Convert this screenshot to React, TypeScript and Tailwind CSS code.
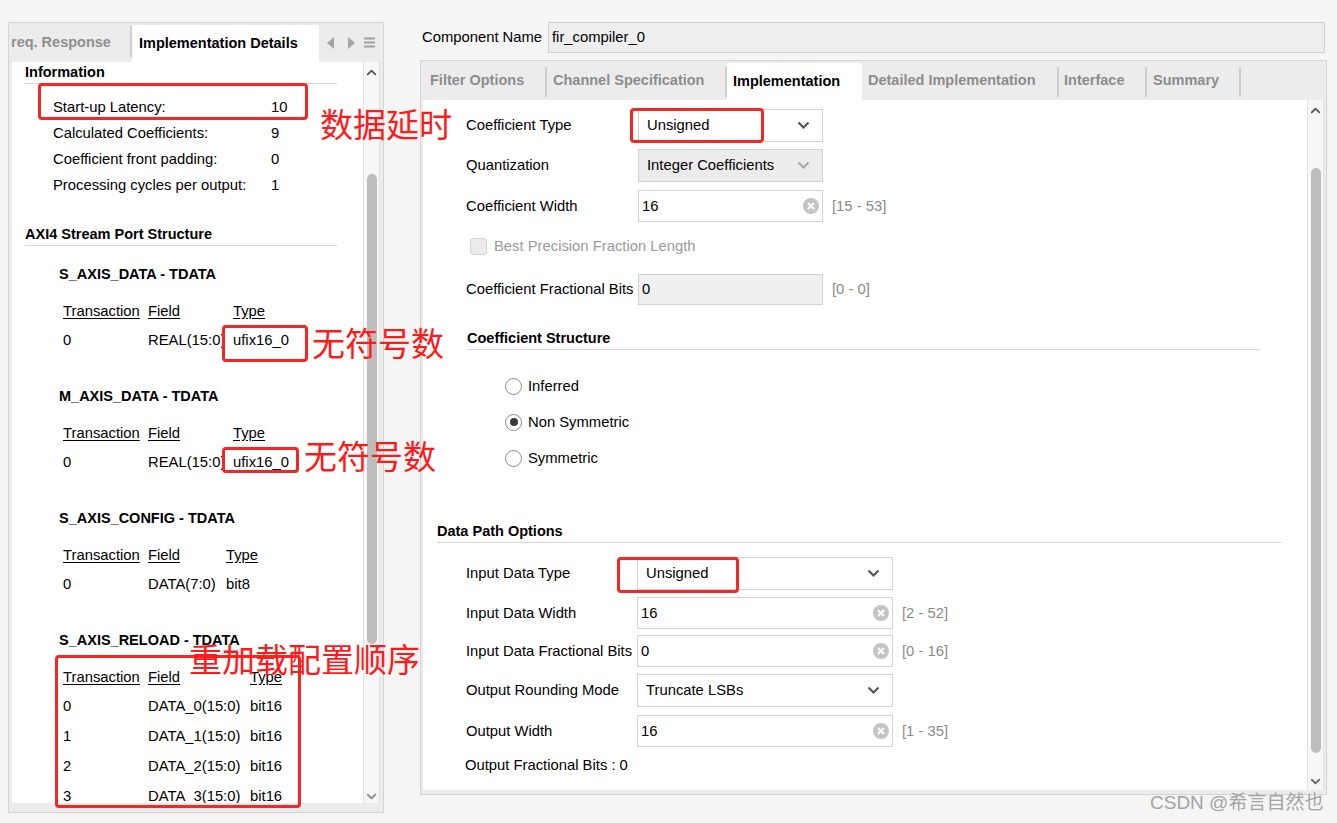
import { ChevronUp, ChevronDown } from "lucide-react";

const font = "font-['Liberation_Sans','Noto_Sans_CJK_SC',sans-serif]";
const cjk = "font-['Noto_Sans_CJK_SC',sans-serif]";
const bold = "font-bold text-[14.5px]";

function Chevron({ light }: { light?: boolean }) {
  return (
    <svg width="13" height="9" viewBox="0 0 13 9">
      <polyline points="1.5,1.5 6.5,6.5 11.5,1.5" fill="none" stroke={light ? "#a8a8a8" : "#555"} strokeWidth="2.2" />
    </svg>
  );
}

function ClearIcon() {
  return (
    <svg width="16" height="16" viewBox="0 0 16 16">
      <circle cx="8" cy="8" r="8" fill="#c4c4c4" />
      <path d="M5 5 L11 11 M11 5 L5 11" stroke="#fff" strokeWidth="2" />
    </svg>
  );
}

function Select({ value, width, disabled }: { value: string; width: string; disabled?: boolean }) {
  return (
    <div className={`${width} h-[33px] border border-[#d2d2d2] ${disabled ? "bg-[#ececec]" : "bg-white"} flex items-center justify-between pl-[8px] pr-[12px]`}>
      <span>{value}</span>
      <Chevron light={disabled} />
    </div>
  );
}

function Input({ value, width, clear }: { value: string; width: string; clear?: boolean }) {
  return (
    <div className={`${width} h-[32px] border border-[#d2d2d2] bg-white flex items-center justify-between pl-[3px] pr-[3px]`}>
      <span>{value}</span>
      {clear && <ClearIcon />}
    </div>
  );
}

function InfoRow({ label, value }: { label: string; value: string }) {
  return (
    <div className="h-[26px] flex items-center pl-[41px]">
      <span className="w-[218px]">{label}</span>
      <span>{value}</span>
    </div>
  );
}

type PortProps = {
  title: string;
  fieldW: string;
  clip?: boolean;
  rows: [string, string, string][];
  mt: string;
};

function Port({ title, fieldW, clip, rows, mt }: PortProps) {
  return (
    <div className={mt}>
      <div className={`h-[20px] flex items-center pl-[47px] ${bold}`}>{title}</div>
      <div className="pl-[51px] mt-[16px] h-[20px] flex items-center">
        <span className="w-[85px] underline underline-offset-2">Transaction</span>
        <span className={`${fieldW} underline underline-offset-2`}>Field</span>
        <span className="underline underline-offset-2">Type</span>
      </div>
      {rows.map((r, i) => (
        <div key={i} className={`pl-[51px] h-[20px] flex items-center ${i === 0 ? "mt-[9px]" : "mt-[10px]"}`}>
          <span className="w-[85px]">{r[0]}</span>
          <span className={`${fieldW} whitespace-nowrap overflow-hidden`}>
            <span className={clip ? "block w-[79px] overflow-hidden" : ""}>{r[1]}</span>
          </span>
          <span>{r[2]}</span>
        </div>
      ))}
    </div>
  );
}

function LeftPanel() {
  return (
    <div className="w-[376px] h-[791px] border border-[#d3d3d3] bg-[#ececec] flex flex-col">
      <div className="h-[39px] flex">
        <div className={`w-[121px] flex items-center pl-[2px] whitespace-nowrap text-[#8e8e8e] ${bold}`}>req. Response</div>
        <div className="w-[2px] h-[31px] mt-[3px] bg-[#cdcdcd]" />
        <div className={`w-[187px] mt-[2px] bg-white flex items-center pl-[7px] ${bold}`}>Implementation Details</div>
        <div className="flex-1 flex items-center">
          <svg width="8" height="12" viewBox="0 0 8 12" className="ml-[8px]">
            <polygon points="7,0 7,12 0,6" fill="#a4a4a4" />
          </svg>
          <svg width="8" height="12" viewBox="0 0 8 12" className="ml-[12px]">
            <polygon points="1,0 1,12 8,6" fill="#a4a4a4" />
          </svg>
          <svg width="11" height="11" viewBox="0 0 11 11" className="ml-[9px]">
            <path d="M0 1.5 H11 M0 5.5 H11 M0 9.5 H11" stroke="#a0a0a0" strokeWidth="2" />
          </svg>
        </div>
      </div>
      <div className="h-[741px] mx-[3px] flex">
        <div className="flex-1 bg-white overflow-hidden">
          <div className={`ml-[13px] w-[312px] h-[22px] border-b border-[#d8d8d8] flex items-center ${bold}`}>Information</div>
          <div className="mt-[10px]">
            <InfoRow label="Start-up Latency:" value="10" />
            <InfoRow label="Calculated Coefficients:" value="9" />
            <InfoRow label="Coefficient front padding:" value="0" />
            <InfoRow label="Processing cycles per output:" value="1" />
          </div>
          <div className={`mt-[26px] ml-[13px] w-[312px] h-[22px] border-b border-[#d8d8d8] flex items-center ${bold}`}>
            AXI4 Stream Port Structure
          </div>
          <Port mt="mt-[19px]" title="S_AXIS_DATA - TDATA" fieldW="w-[85px]" clip rows={[["0", "REAL(15:0)", "ufix16_0"]]} />
          <Port mt="mt-[37px]" title="M_AXIS_DATA - TDATA" fieldW="w-[85px]" clip rows={[["0", "REAL(15:0)", "ufix16_0"]]} />
          <Port mt="mt-[37px]" title="S_AXIS_CONFIG - TDATA" fieldW="w-[78px]" rows={[["0", "DATA(7:0)", "bit8"]]} />
          <Port
            mt="mt-[37px]"
            title="S_AXIS_RELOAD - TDATA"
            fieldW="w-[102px]"
            rows={[
              ["0", "DATA_0(15:0)", "bit16"],
              ["1", "DATA_1(15:0)", "bit16"],
              ["2", "DATA_2(15:0)", "bit16"],
              ["3", "DATA_3(15:0)", "bit16"],
            ]}
          />
        </div>
        <div className="w-[17px] bg-[#f7f7f7] border-x border-[#e2e2e2] flex flex-col items-center">
          <ChevronUp size={15} strokeWidth={3} color="#555" className="mt-[3px]" />
          <div className="w-[10px] h-[470px] mt-[94px] rounded-full bg-[#bdbdbd]" />
          <div className="flex-1" />
          <ChevronDown size={15} strokeWidth={3} color="#888" className="mb-[-1px]" />
        </div>
      </div>
    </div>
  );
}

function FRow({ label, children, range, labelW = "w-[172px]", mt }: { label: string; children: React.ReactNode; range?: string; labelW?: string; mt: string }) {
  return (
    <div className={`flex items-center pl-[43px] ${mt}`}>
      <span className={`${labelW} whitespace-nowrap`}>{label}</span>
      {children}
      {range && <span className="ml-[9px] text-[#8a8a8a]">{range}</span>}
    </div>
  );
}

function Radio({ label, checked, mt }: { label: string; checked?: boolean; mt: string }) {
  return (
    <div className={`h-[20px] flex items-center pl-[82px] ${mt}`}>
      <div className="w-[17px] h-[17px] rounded-full border-[1.5px] border-[#8c8c8c] bg-white flex items-center justify-center">
        {checked && <div className="w-[8px] h-[8px] rounded-full bg-[#3a3a3a]" />}
      </div>
      <span className="ml-[6px]">{label}</span>
    </div>
  );
}

function RightPanel() {
  const tabs = [
    { t: "Filter Options", w: "w-[124px]", pl: "pl-[7px]" },
    { t: "Channel Specification", w: "w-[180px]", pl: "pl-[6px]" },
    { t: "Implementation", w: "w-[135px]", pl: "pl-[6px]", active: true },
    { t: "Detailed Implementation", w: "w-[197px]", pl: "pl-[6px]" },
    { t: "Interface", w: "w-[88px]", pl: "pl-[5px]" },
    { t: "Summary", w: "w-[94px]", pl: "pl-[6px]" },
  ];
  return (
    <div className="w-[907px] flex flex-col">
      <div className="h-[31px] flex items-center">
        <span className="w-[128px] pl-[2px] whitespace-nowrap">Component Name</span>
        <div className="flex-1 mr-[2px] h-[31px] border border-[#d0d0d0] bg-[#eeeeee] flex items-center pl-[3px]">fir_compiler_0</div>
      </div>
      <div className="mt-[7px] h-[735px] border border-[#d3d3d3] bg-[#ececec] flex flex-col px-[2px]">
        <div className="h-[39px] flex">
          {tabs.map((tab) =>
            tab.active ? (
              <div key={tab.t} className={`${tab.w} mt-[2px] bg-white flex items-center ${tab.pl} ${bold}`}>
                {tab.t}
              </div>
            ) : (
              <div key={tab.t} className={`${tab.w} flex items-center`}>
                <div className={`flex-1 ${tab.pl} text-[#8c8c8c] whitespace-nowrap ${bold}`}>{tab.t}</div>
                <div className="w-[2px] h-[30px] mt-[2px] bg-[#cdcdcd]" />
              </div>
            )
          )}
        </div>
        <div className="h-[690px] flex">
          <div className="flex-1 bg-white pt-[9px]">
            <FRow label="Coefficient Type" mt="">
              <Select value="Unsigned" width="w-[185px]" />
            </FRow>
            <FRow label="Quantization" mt="mt-[7px]">
              <Select value="Integer Coefficients" width="w-[185px]" disabled />
            </FRow>
            <FRow label="Coefficient Width" range="[15 - 53]" mt="mt-[8px]">
              <Input value="16" width="w-[185px]" clear />
            </FRow>
            <div className="mt-[14px] h-[20px] flex items-center pl-[47px] text-[#9a9a9a]">
              <div className="w-[17px] h-[17px] rounded-[3px] border border-[#d4d4d4] bg-[#ececec]" />
              <span className="ml-[7px]">Best Precision Fraction Length</span>
            </div>
            <FRow label="Coefficient Fractional Bits" range="[0 - 0]" mt="mt-[18px]">
              <div className="w-[185px] h-[31px] border border-[#d2d2d2] bg-[#efefef] flex items-center pl-[3px]">0</div>
            </FRow>
            <div className={`mt-[23px] ml-[44px] w-[793px] h-[22px] border-b border-[#d6d6d6] flex items-center ${bold}`}>
              Coefficient Structure
            </div>
            <Radio label="Inferred" mt="mt-[26px]" />
            <Radio label="Non Symmetric" checked mt="mt-[16px]" />
            <Radio label="Symmetric" mt="mt-[16px]" />
            <div className={`mt-[53px] ml-[14px] w-[845px] h-[22px] border-b border-[#d6d6d6] flex items-center ${bold}`}>
              Data Path Options
            </div>
            <FRow label="Input Data Type" labelW="w-[171px]" mt="mt-[14px]">
              <Select value="Unsigned" width="w-[256px]" />
            </FRow>
            <FRow label="Input Data Width" labelW="w-[171px]" range="[2 - 52]" mt="mt-[7px]">
              <Input value="16" width="w-[256px]" clear />
            </FRow>
            <FRow label="Input Data Fractional Bits" labelW="w-[171px]" range="[0 - 16]" mt="mt-[6px]">
              <Input value="0" width="w-[256px]" clear />
            </FRow>
            <FRow label="Output Rounding Mode" labelW="w-[171px]" mt="mt-[7px]">
              <Select value="Truncate LSBs" width="w-[256px]" />
            </FRow>
            <FRow label="Output Width" labelW="w-[171px]" range="[1 - 35]" mt="mt-[8px]">
              <Input value="16" width="w-[256px]" clear />
            </FRow>
            <div className="mt-[8px] h-[20px] flex items-center pl-[42px]">Output Fractional Bits : 0</div>
          </div>
          <div className="w-[17px] bg-[#f7f7f7] border-x border-[#e2e2e2] flex flex-col items-center">
            <ChevronUp size={15} strokeWidth={3} color="#555" className="mt-[3px]" />
            <div className="w-[10px] h-[585px] mt-[50px] rounded-full bg-[#bdbdbd]" />
            <div className="flex-1" />
            <ChevronDown size={15} strokeWidth={3} color="#666" className="mb-[1px]" />
          </div>
        </div>
      </div>
    </div>
  );
}

function RedBox({ c }: { c: string }) {
  return <div className={`absolute border-[3px] border-[#f52626] rounded-[4px] ${c}`} />;
}

function RedText({ t, c }: { t: string; c: string }) {
  return <div className={`absolute ${cjk} text-[33px] leading-none text-[#ff1a1a] whitespace-nowrap ${c}`}>{t}</div>;
}

export default function App() {
  return (
    <div className={`relative w-[1337px] h-[823px] overflow-hidden bg-[#f5f5f5] text-[14.8px] text-black ${font}`}>
      <div className="flex items-start pl-[8px] pt-[22px]">
        <LeftPanel />
        <div className="ml-[36px]">
          <RightPanel />
        </div>
      </div>

      <RedBox c="left-[38px] top-[83px] w-[270px] h-[37px]" />
      <RedBox c="left-[222px] top-[325px] w-[86px] h-[37px]" />
      <RedBox c="left-[222px] top-[447px] w-[77px] h-[26px]" />
      <RedBox c="left-[55px] top-[655px] w-[246px] h-[153px]" />
      <RedBox c="left-[630px] top-[108px] w-[134px] h-[35px]" />
      <RedBox c="left-[617px] top-[557px] w-[122px] h-[36px]" />

      <RedText t="数据延时" c="left-[320px] top-[107px]" />
      <RedText t="无符号数" c="left-[312px] top-[326px]" />
      <RedText t="无符号数" c="left-[304px] top-[439px]" />
      <RedText t="重加载配置顺序" c="left-[189px] top-[642px]" />

      <div className={`absolute left-[1150px] top-[793px] text-[19px] leading-none text-[#a3a3a3] whitespace-nowrap ${font}`}>
        CSDN @希言自然也
      </div>
    </div>
  );
}
